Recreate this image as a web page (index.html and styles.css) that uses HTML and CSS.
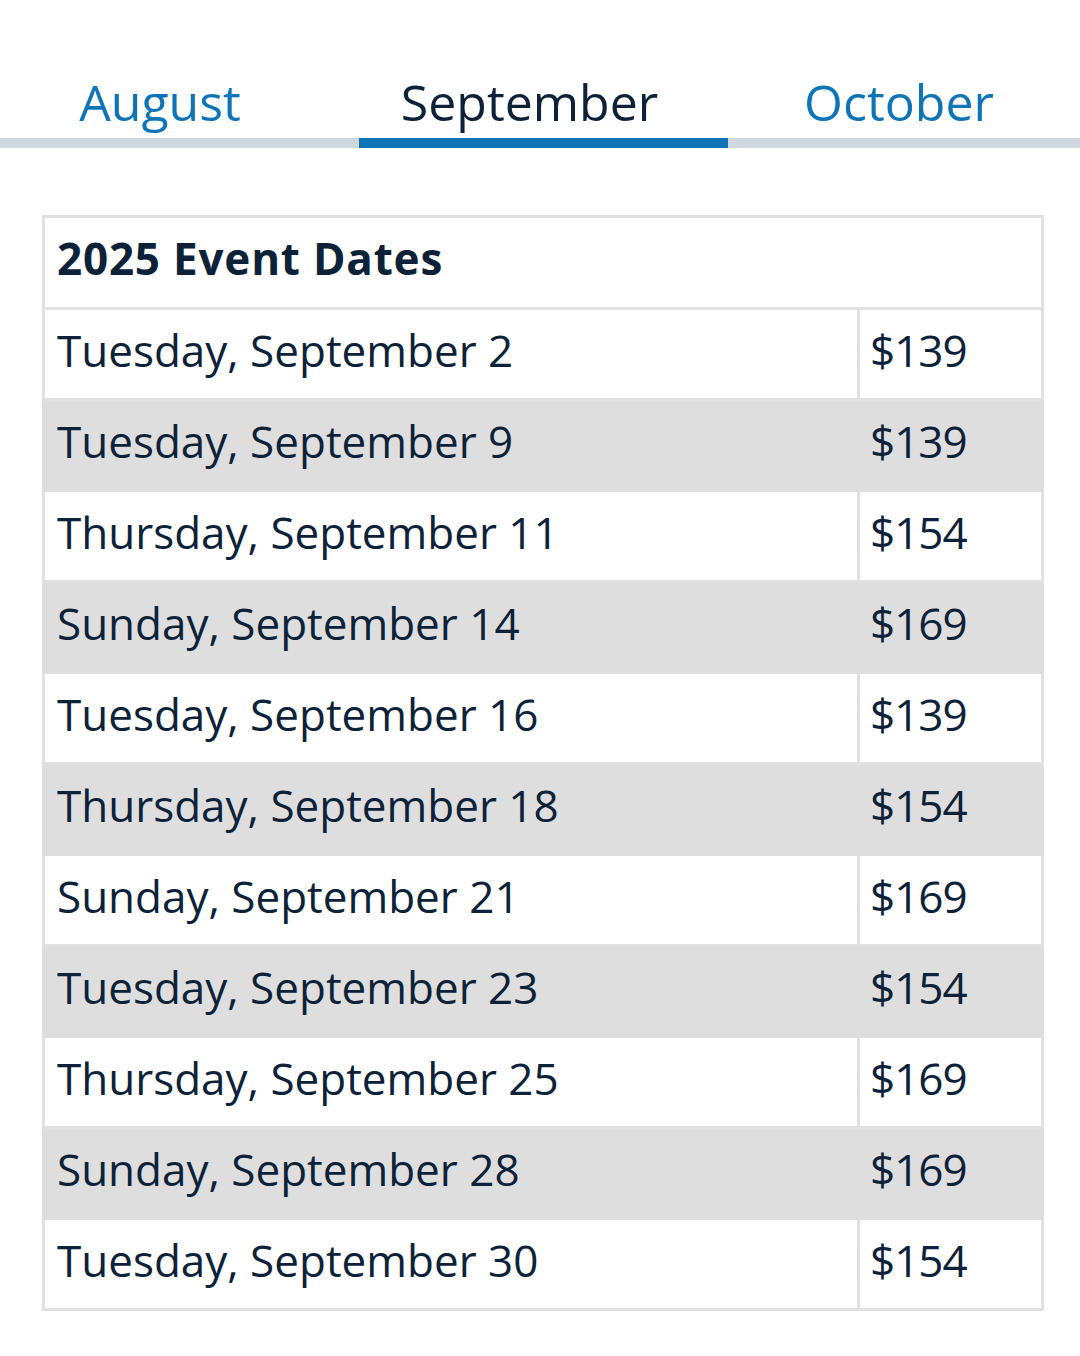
FILE: index.html
```html
<!DOCTYPE html>
<html>
<head>
<meta charset="utf-8">
<link rel="stylesheet" href="styles.css">
</head>
<body>
<nav class="tabs">
  <a class="tab tab-aug">August</a>
  <a class="tab tab-sep active">September</a>
  <a class="tab tab-oct">October</a>
</nav>
<table class="dates">
  <thead>
    <tr><th colspan="2">2025 Event Dates</th></tr>
  </thead>
  <tbody>
    <tr><td class="day">Tuesday, September 2</td><td class="price">$139</td></tr>
    <tr class="alt"><td class="day">Tuesday, September 9</td><td class="price">$139</td></tr>
    <tr><td class="day">Thursday, September 11</td><td class="price">$154</td></tr>
    <tr class="alt"><td class="day">Sunday, September 14</td><td class="price">$169</td></tr>
    <tr><td class="day">Tuesday, September 16</td><td class="price">$139</td></tr>
    <tr class="alt"><td class="day">Thursday, September 18</td><td class="price">$154</td></tr>
    <tr><td class="day">Sunday, September 21</td><td class="price">$169</td></tr>
    <tr class="alt"><td class="day">Tuesday, September 23</td><td class="price">$154</td></tr>
    <tr><td class="day">Thursday, September 25</td><td class="price">$169</td></tr>
    <tr class="alt"><td class="day">Sunday, September 28</td><td class="price">$169</td></tr>
    <tr><td class="day">Tuesday, September 30</td><td class="price">$154</td></tr>
  </tbody>
</table>
</body>
</html>
```
FILE: styles.css
```css
html, body {
  margin: 0;
  padding: 0;
  background: #ffffff;
}
body {
  font-family: "Open Sans", "Noto Sans", sans-serif;
  color: #0d2238;
  width: 1080px;
}
.tabs {
  display: flex;
  margin-top: 70px;
}
.tab {
  display: flex;
  justify-content: center;
  height: 68px;
  border-bottom: 10px solid #d1d7df;
  font-size: 50px;
  line-height: 64px;
  color: #0f74b6;
  box-sizing: content-box;
}
.tab-aug { width: 320px; padding-right: 39px; }
.tab-sep { width: 341px; padding-right: 28px; }
.tab-oct { width: 342px; padding-right: 10px; }
.tab.active {
  color: #0d2238;
  border-bottom-color: #0f74b6;
}
.dates {
  margin: 67px 0 0 42px;
  width: 1002px;
  border-collapse: collapse;
  border: 2px solid #e1e1e1;
}
.dates th {
  text-align: left;
  font-weight: 700;
  font-size: 44px;
  height: 80px;
  padding: 0 0 9px 12px;
  border: 3px solid #e1e1e1;
  letter-spacing: 0.8px;
}
.dates td {
  font-size: 44px;
  height: 80px;
  padding: 0 0 8px 12px;
  border: 3px solid #e1e1e1;
  white-space: nowrap;
}
.dates td.day { width: 800px; }
.dates tr.alt td { background: #dedede; border-color: #dedede; }
.dates td.price { padding-left: 10px; letter-spacing: -1px; }
```
